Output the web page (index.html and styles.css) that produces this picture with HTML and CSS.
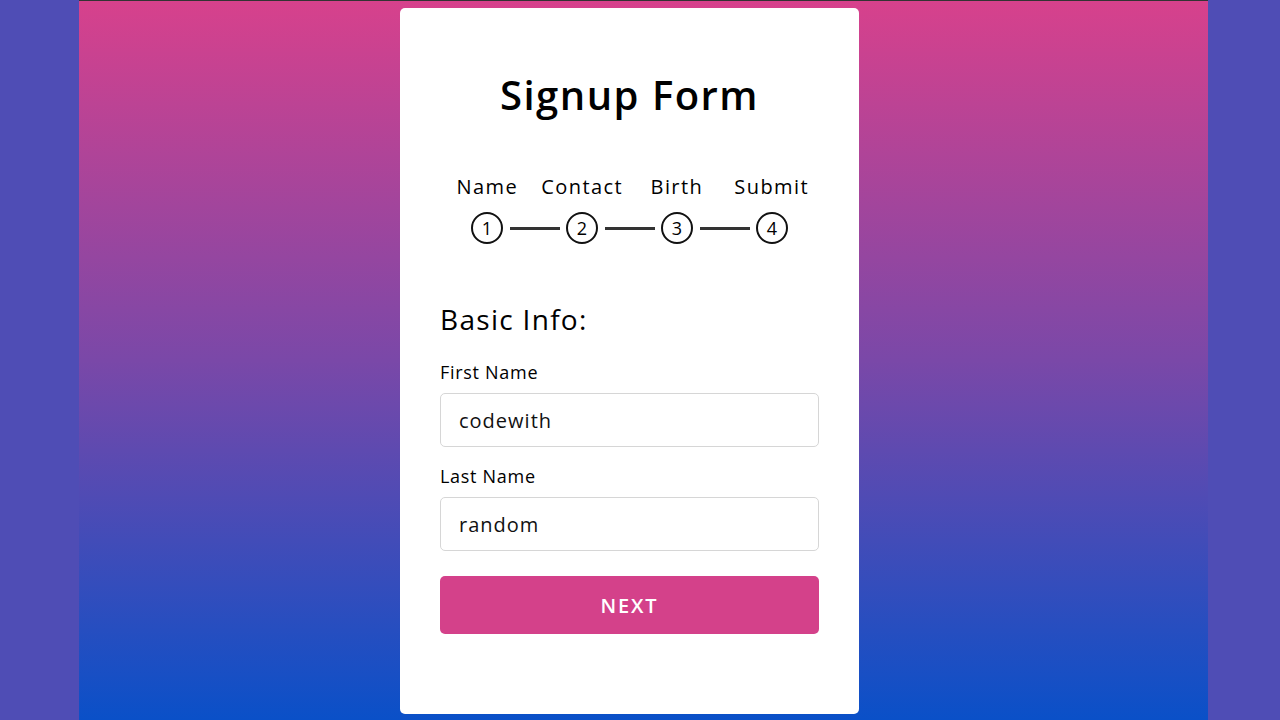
FILE: index.html
```html
<!DOCTYPE html>
<html lang="en">
<head>
<meta charset="utf-8">
<title>Signup Form</title>
<link rel="stylesheet" href="styles.css">
</head>
<body>
<div class="stage">
  <div class="card">
    <h1 class="title">Signup Form</h1>
    <div class="progress">
      <div class="steps-labels">
        <span>Name</span>
        <span>Contact</span>
        <span>Birth</span>
        <span>Submit</span>
      </div>
      <div class="steps-dots">
        <span class="dot">1</span>
        <span class="bar"></span>
        <span class="dot">2</span>
        <span class="bar"></span>
        <span class="dot">3</span>
        <span class="bar"></span>
        <span class="dot">4</span>
      </div>
    </div>
    <form class="form">
      <h2 class="section-title">Basic Info:</h2>
      <label class="field-label first">First Name</label>
      <input class="field-input" type="text" value="codewith">
      <label class="field-label">Last Name</label>
      <input class="field-input" type="text" value="random">
      <button class="btn-next" type="button">NEXT</button>
    </form>
  </div>
</div>
</body>
</html>
```

FILE: styles.css
```css
* { box-sizing: border-box; }

html, body {
  margin: 0;
  padding: 0;
  height: 720px;
  overflow: hidden;
}

body {
  background: #4f4db5;
  font-family: "Open Sans", "Liberation Sans", sans-serif;
  color: #000;
}

.stage {
  margin-left: 79px;
  width: 1129px;
  height: 720px;
  border-top: 1px solid #333;
  background: linear-gradient(to bottom, #d7418c 0%, #7a48a8 50%, #0a50c8 100%);
  padding-top: 7px;
}

.card {
  margin-left: 321px;
  width: 459px;
  height: 706px;
  background: #fff;
  border-radius: 5px;
  padding: 63px 40px 0 40px;
}

.title {
  margin: 0;
  text-align: center;
  font-size: 40px;
  font-weight: 600;
  line-height: 48px;
  letter-spacing: 1.5px;
}

.progress {
  margin-top: 55px;
}

.steps-labels {
  display: grid;
  grid-template-columns: repeat(4, 1fr);
  text-align: center;
  font-size: 20px;
  line-height: 26px;
  letter-spacing: 1.4px;
}

.steps-dots {
  margin-top: 12px;
  display: flex;
  justify-content: center;
  align-items: center;
}

.dot {
  width: 32px;
  height: 32px;
  border: 2px solid #111;
  border-radius: 50%;
  display: flex;
  align-items: center;
  justify-content: center;
  font-size: 18px;
  line-height: 1;
}

.bar {
  width: 50px;
  height: 3px;
  background: #333;
  margin: 0 6px 0 7px;
}

.form {
  margin-top: 57px;
  display: flex;
  flex-direction: column;
}

.section-title {
  margin: 0;
  font-size: 28px;
  font-weight: 400;
  line-height: 36px;
  letter-spacing: 1.3px;
}

.field-label {
  margin-top: 17px;
  font-size: 18px;
  font-weight: 500;
  line-height: 24px;
  letter-spacing: 0.7px;
}

.field-label.first {
  margin-top: 23px;
}

.field-input {
  margin-top: 9px;
  height: 54px;
  width: 100%;
  border: 1px solid #d6d6d6;
  border-radius: 5px;
  padding: 0 18px;
  font-family: inherit;
  font-size: 20px;
  letter-spacing: 1px;
  color: #111;
  background: #fff;
  outline: none;
}

.btn-next {
  margin-top: 25px;
  height: 58px;
  width: 100%;
  border: none;
  border-radius: 5px;
  background: #d4418a;
  color: #fff;
  font-family: "Open Sans", sans-serif;
  font-size: 20px;
  font-weight: 600;
  letter-spacing: 1.8px;
}
```
